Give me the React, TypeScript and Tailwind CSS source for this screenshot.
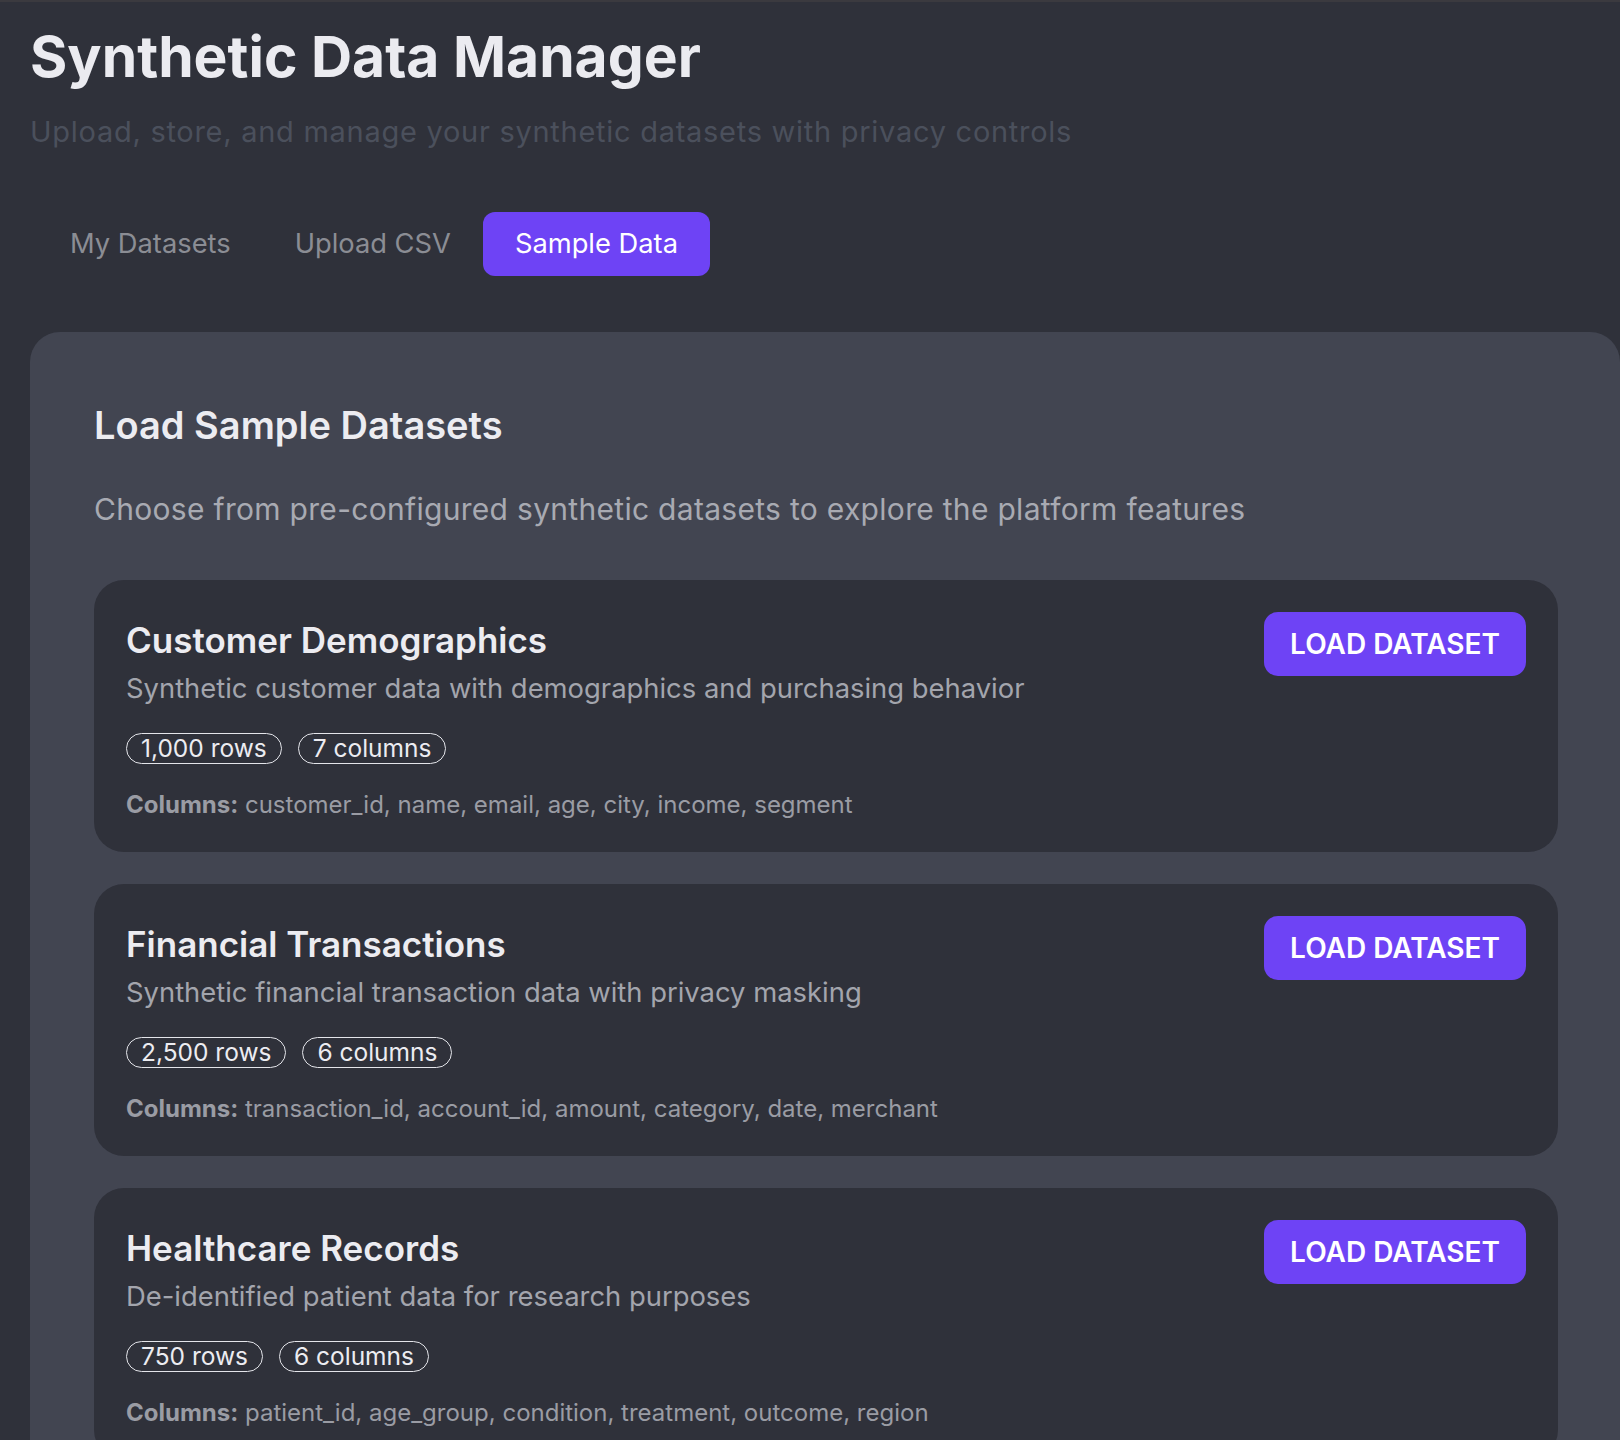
import React, { useState } from "react";

interface SampleDataset {
  name: string;
  description: string;
  rows: string;
  columns: string[];
}

const SAMPLE_DATASETS: SampleDataset[] = [
  {
    name: "Customer Demographics",
    description: "Synthetic customer data with demographics and purchasing behavior",
    rows: "1,000",
    columns: ["customer_id", "name", "email", "age", "city", "income", "segment"],
  },
  {
    name: "Financial Transactions",
    description: "Synthetic financial transaction data with privacy masking",
    rows: "2,500",
    columns: ["transaction_id", "account_id", "amount", "category", "date", "merchant"],
  },
  {
    name: "Healthcare Records",
    description: "De-identified patient data for research purposes",
    rows: "750",
    columns: ["patient_id", "age_group", "condition", "treatment", "outcome", "region"],
  },
];

const TABS = ["My Datasets", "Upload CSV", "Sample Data"];

const Pill = ({ children }: { children: React.ReactNode }) => (
  <span className="rounded-full border-[1.5px] border-[#e4e5ea] px-[14px] text-[24.5px] leading-[29px] text-[#ececf1]">
    {children}
  </span>
);

const DatasetCard = ({ dataset }: { dataset: SampleDataset }) => (
  <div className="flex items-start justify-between rounded-[30px] bg-[#2f313a] p-8">
    <div>
      <h3 className="mt-1 text-[35px] font-semibold leading-[48px] text-[#ececf1]">
        {dataset.name}
      </h3>
      <p className="mt-1 text-[27.4px] leading-[40px] text-[#a3a5ad]">
        {dataset.description}
      </p>
      <div className="mt-[25px] flex gap-4">
        <Pill>{dataset.rows} rows</Pill>
        <Pill>{dataset.columns.length} columns</Pill>
      </div>
      <p className="mt-[26px] text-[24px] leading-[30px] text-[#9a9ca4]">
        <span className="font-bold">Columns:</span> {dataset.columns.join(", ")}
      </p>
    </div>
    <button className="rounded-[14px] bg-[#6e43f5] px-[26px] py-4 text-[28px] font-semibold leading-[32px] text-white">
      LOAD DATASET
    </button>
  </div>
);

export default function App() {
  const [activeTab, setActiveTab] = useState("Sample Data");

  return (
    <div className="min-h-screen overflow-hidden border-t-2 border-[#3b3a3f] bg-[#2f313a] pl-[30px] pt-[23px] font-['Inter','Noto_Sans',sans-serif]">
      <h1 className="text-[57px] font-bold leading-[64px] text-[#ebebf0]">
        Synthetic Data Manager
      </h1>
      <p className="mt-[23px] text-[29px] leading-[40px] tracking-[0.025em] text-[#4b505c]">
        Upload, store, and manage your synthetic datasets with privacy controls
      </p>

      {/* tab bar */}
      <div className="mt-[52px] flex p-2">
        {TABS.map((tab) => (
          <button
            key={tab}
            onClick={() => setActiveTab(tab)}
            className={
              tab === activeTab
                ? "rounded-[12px] bg-[#6e43f5] px-8 py-4 text-[27.3px] leading-[32px] text-white"
                : "rounded-[12px] px-8 py-4 text-[27.3px] leading-[32px] text-[#8b8d94]"
            }
          >
            {tab}
          </button>
        ))}
      </div>

      <div className="mt-12 rounded-[30px] bg-[#424551] py-16 pl-16 pr-[62px]">
        <h2 className="text-[38px] font-semibold leading-[58px] text-[#ececf1]">
          Load Sample Datasets
        </h2>
        <p className="mt-[33px] text-[30px] leading-[44px] tracking-[0.01em] text-[#a8aab2]">
          Choose from pre-configured synthetic datasets to explore the platform features
        </p>
        <div className="mt-[49px] flex flex-col gap-8">
          {SAMPLE_DATASETS.map((dataset) => (
            <DatasetCard key={dataset.name} dataset={dataset} />
          ))}
        </div>
      </div>
    </div>
  );
}
